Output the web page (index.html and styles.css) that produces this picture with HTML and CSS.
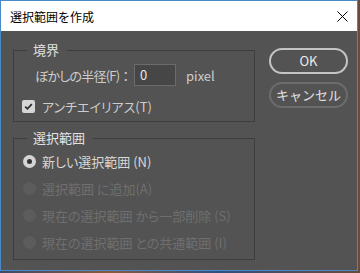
FILE: index.html
```html
<!DOCTYPE html>
<html lang="ja">
<head>
<meta charset="utf-8">
<title>選択範囲を作成</title>
<link rel="stylesheet" href="styles.css">
</head>
<body>
<div class="window">
  <div class="titlebar">
    <span class="title">選択範囲を作成</span>
    <svg class="close" width="11" height="11" viewBox="0 0 11 11"><path d="M0.5 0.5 L10.5 10.5 M10.5 0.5 L0.5 10.5" stroke="#000" stroke-width="1" fill="none"/></svg>
  </div>
  <div class="content">
    <div class="left">
      <div class="group">
        <div class="group-head"><span class="corner-l"></span><span class="legend">境界</span><span class="corner-r"></span></div>
        <div class="group-box box1">
          <div class="field-row">
            <span class="field-label">ぼかしの半径(F)<span class="colon">：</span></span>
            <span class="input">0</span>
            <span class="unit">pixel</span>
          </div>
          <div class="check-row">
            <span class="checkbox"><svg width="13" height="13" viewBox="0 0 13 13"><path d="M3.2 6.6 L5.4 8.8 L9.8 4.2" stroke="#2e2e2e" stroke-width="1.8" fill="none"/></svg></span>
            <span class="check-label">アンチエイリアス(T)</span>
          </div>
        </div>
      </div>
      <div class="group group2">
        <div class="group-head"><span class="corner-l"></span><span class="legend">選択範囲</span><span class="corner-r"></span></div>
        <div class="group-box box2">
          <div class="radio-row"><span class="radio on"></span><span class="radio-label">新しい選択範囲 (N)</span></div>
          <div class="radio-row disabled"><span class="radio"></span><span class="radio-label">選択範囲 に追加(A)</span></div>
          <div class="radio-row disabled"><span class="radio"></span><span class="radio-label">現在の選択範囲 から一部削除 (S)</span></div>
          <div class="radio-row disabled"><span class="radio"></span><span class="radio-label">現在の選択範囲 との共通範囲 (I)</span></div>
        </div>
      </div>
    </div>
    <div class="right">
      <button class="btn ok">OK</button>
      <button class="btn cancel">キャンセル</button>
    </div>
  </div>
</div>
</body>
</html>
```

FILE: styles.css
```css
html, body {
  margin: 0;
  padding: 0;
}
body {
  width: 360px;
  height: 273px;
  overflow: hidden;
  background: linear-gradient(90deg, #3a4a6a 0%, #8a5a3a 30%, #2f4f7f 60%, #6a4a3a 100%);
  font-family: "Noto Sans CJK JP", "Noto Sans", sans-serif;
  font-feature-settings: "palt";
}
.window {
  box-sizing: border-box;
  width: 358px;
  height: 271px;
  border: 1px solid #4a88c7;
  background: #535353;
  display: flex;
  flex-direction: column;
}
.titlebar {
  height: 30px;
  flex: none;
  background: #ffffff;
  display: flex;
  align-items: center;
  justify-content: space-between;
  padding: 0 9px 0 9px;
}
.title {
  font-size: 12px;
  color: #000;
  font-feature-settings: normal;
}
.close {
  display: block;
}
.content {
  flex: 1;
  display: flex;
  gap: 14px;
  padding: 11px 9px 0 12px;
}
.left {
  width: 242px;
  flex: none;
}
.group-head {
  display: flex;
  height: 16px;
}
.corner-l, .corner-r {
  box-sizing: border-box;
  height: 8px;
  align-self: flex-end;
  border-top: 1px solid #3d3d3d;
}
.corner-l {
  width: 14px;
  border-left: 1px solid #3d3d3d;
}
.corner-r {
  flex: 1;
  border-right: 1px solid #3d3d3d;
}
.legend {
  padding: 0 8px 0 6px;
  font-size: 13px;
  line-height: 16px;
  color: #e2e2e2;
}
.group-box {
  border: 1px solid #3d3d3d;
  border-top: none;
}
.box1 {
  padding: 6px 0 6px 8px;
}
.field-row {
  display: flex;
  align-items: center;
  height: 22px;
  margin-left: 13px;
  font-size: 13px;
  color: #cdcdcd;
}
.field-label {
  width: 99px;
  flex: none;
  white-space: nowrap;
  letter-spacing: -0.8px;
}
.colon {
  font-feature-settings: normal;
  letter-spacing: 0;
}
.input {
  box-sizing: border-box;
  width: 42px;
  height: 22px;
  border: 1px solid #6b6b6b;
  background: #464646;
  color: #e8e8e8;
  padding-left: 5px;
  line-height: 20px;
}
.unit {
  margin-left: 10px;
  color: #cdcdcd;
}
.check-row {
  display: flex;
  align-items: center;
  height: 18px;
  margin-top: 11px;
  font-size: 13px;
  color: #cdcdcd;
}
.checkbox {
  width: 13px;
  height: 13px;
  border-radius: 2px;
  background: #d6d6d6;
  display: flex;
}
.check-label {
  margin-left: 7px;
}
.group2 {
  margin-top: 8px;
}
.box2 {
  padding: 2px 0 3px 9px;
}
.radio-row {
  display: flex;
  align-items: center;
  height: 27px;
  font-size: 13px;
  color: #d8d8d8;
}
.radio-row.disabled {
  color: #6f6f6f;
}
.radio {
  width: 13px;
  height: 13px;
  border-radius: 50%;
  background: #5c5c5c;
  display: flex;
  align-items: center;
  justify-content: center;
}
.radio.on {
  background: #d4d4d4;
}
.radio.on::after {
  content: "";
  width: 5px;
  height: 5px;
  border-radius: 50%;
  background: #333;
}
.radio-label {
  margin-left: 6px;
  white-space: nowrap;
}
.right {
  width: 79px;
  flex: none;
  display: flex;
  flex-direction: column;
  gap: 8px;
  padding-top: 6px;
}
.btn {
  box-sizing: border-box;
  width: 79px;
  height: 26px;
  border-radius: 13px;
  background: transparent;
  font-family: inherit;
  font-size: 13px;
  color: #ececec;
  padding: 0;
  line-height: 22px;
}
.ok {
  border: 2px solid #c4c4c4;
}
.cancel {
  border: 2px solid #6c6c6c;
  color: #e0e0e0;
}
```
